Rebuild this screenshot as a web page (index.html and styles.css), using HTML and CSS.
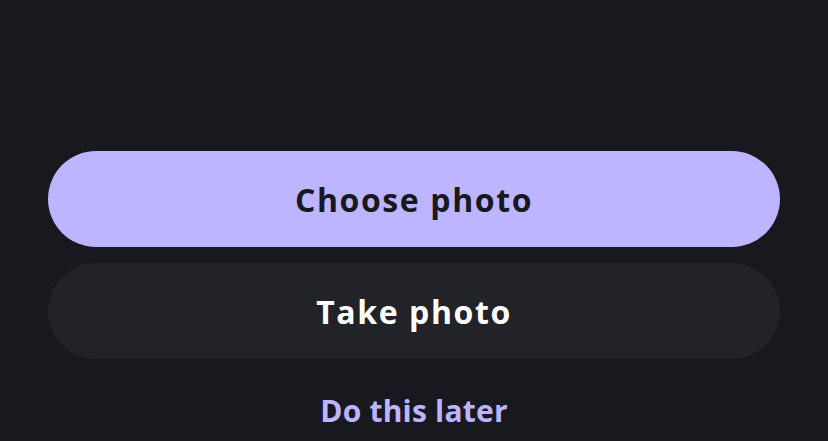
FILE: index.html
```html
<!DOCTYPE html>
<html lang="en">
<head>
<meta charset="utf-8">
<link rel="stylesheet" href="styles.css">
</head>
<body>
<main class="actions">
  <button class="btn btn-primary">Choose photo</button>
  <button class="btn btn-secondary">Take photo</button>
  <a class="later" href="#">Do this later</a>
</main>
</body>
</html>
```
FILE: styles.css
```css
html, body {
  margin: 0;
  padding: 0;
  background: #18181f;
  height: 100%;
  overflow: hidden;
}
body {
  font-family: "Open Sans", "Noto Sans", sans-serif;
}
.actions {
  display: flex;
  flex-direction: column;
  align-items: stretch;
  gap: 16px;
  padding: 151px 48px 0;
}
.btn {
  height: 96px;
  border: none;
  border-radius: 48px;
  font-family: inherit;
  font-size: 32px;
  font-weight: 700;
  letter-spacing: 1.6px;
  cursor: pointer;
}
.btn-primary {
  background: #bdb5ff;
  color: #18181f;
}
.btn-secondary {
  background: #222229;
  color: #ffffff;
}
.later {
  align-self: center;
  margin-top: 16px;
  line-height: 40px;
  font-size: 30px;
  font-weight: 700;
  letter-spacing: 0.2px;
  color: #bdb5ff;
  text-decoration: none;
}
```
